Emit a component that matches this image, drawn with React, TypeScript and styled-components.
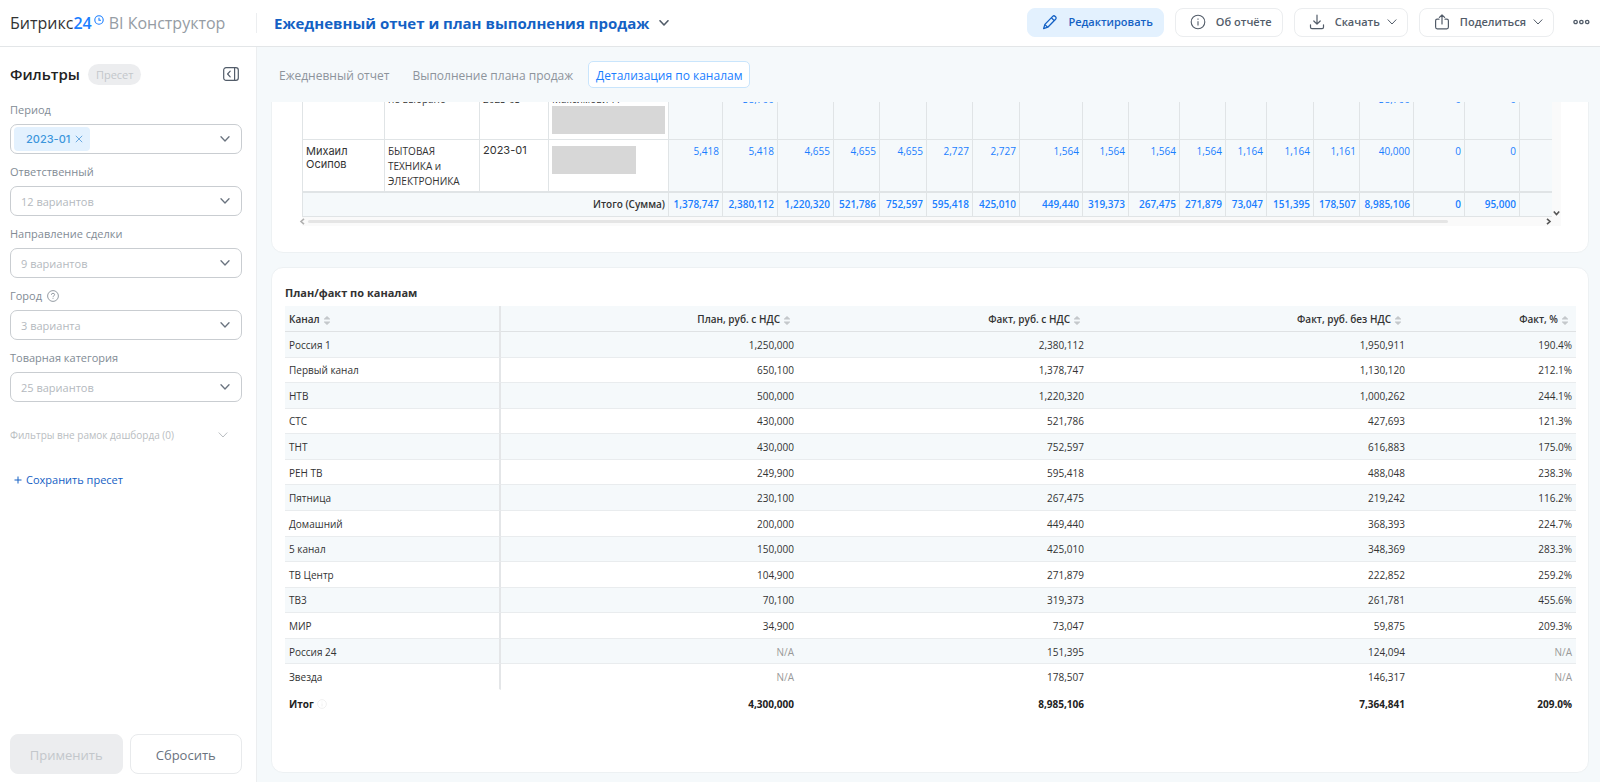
import React from "react";
import styled, { createGlobalStyle } from "styled-components";

const GlobalStyle = createGlobalStyle`
  *, *::before, *::after { box-sizing: border-box; }
  body { margin: 0; background: #f5f9fb; }
  body, button, select, table { font-family: "Open Sans", "Noto Sans", sans-serif; }
  button, select { margin: 0; padding: 0; border: 0; background: none; color: inherit; cursor: pointer; }
  svg { display: block; flex: none; }
`;

const Shell = styled.div`
  display: grid;
  grid-template-rows: 47px minmax(0, 1fr);
  grid-template-columns: 257px minmax(0, 1fr);
  height: 100vh;
  min-width: 1200px;
  color: #333;
`;

const Header = styled.header`
  grid-column: 1 / -1;
  display: flex;
  align-items: center;
  background: #fff;
  border-bottom: 1px solid #e3e6e8;
  padding-right: 10px;
`;

const Logo = styled.a`
  display: flex;
  align-items: center;
  width: 257px;
  height: 20px;
  padding-left: 10px;
  border-right: 1px solid #eceef0;
  font-size: 16px;
  line-height: 20px;
  color: #333;
  text-decoration: none;
  white-space: nowrap;
  b { font-weight: 500; }
  strong { font-weight: 600; color: #1a7eff; }
  svg { margin: 0 5px 6px 2px; }
  span { color: #959ca4; }
`;

const ReportTitle = styled.button`
  display: flex;
  align-items: center;
  gap: 10px;
  margin-left: 17px;
  font-size: 15px;
  line-height: 22px;
  font-weight: 700;
  color: #1461c4;
  white-space: nowrap;
`;

const Actions = styled.div`
  display: flex;
  align-items: center;
  gap: 11px;
  margin-left: auto;
`;

const ActionButton = styled.button<{ $primary?: boolean }>`
  display: flex;
  align-items: center;
  height: 29px;
  padding: 0 10px 0 14px;
  margin-bottom: 2px;
  border: 1px solid ${(p) => (p.$primary ? "#e3f1fe" : "#ebedef")};
  border-radius: 8px;
  background: ${(p) => (p.$primary ? "#e3f1fe" : "#fff")};
  color: ${(p) => (p.$primary ? "#1461c4" : "#525c69")};
  font-size: 11px;
  line-height: 16px;
  font-weight: 600;
  white-space: nowrap;
  span { margin: 0 7px 0 10px; }
  span:last-child { margin-right: 0; }
`;

const MoreButton = styled.button`
  padding: 7px 0 9px 8px;
`;

const Sidebar = styled.aside`
  display: flex;
  flex-direction: column;
  padding: 14px 14px 8px 10px;
  background: #fff;
  border-right: 1px solid #eceef0;
`;

const SidebarHead = styled.div`
  display: flex;
  align-items: center;
  gap: 8px;
  height: 26px;
  margin-bottom: 13px;
  padding-right: 3px;
  h2 { margin: 0; font-size: 15px; line-height: 22px; font-weight: 600; color: #222; }
  button { margin-left: auto; }
`;

const PresetPill = styled.span`
  height: 21px;
  padding: 0 8px;
  border-radius: 11px;
  background: #ecedef;
  color: #c3c7cb;
  font-size: 11px;
  line-height: 21px;
`;

const Field = styled.div`
  height: 62px;
`;

const FieldLabel = styled.label`
  display: flex;
  align-items: center;
  gap: 5px;
  height: 20px;
  margin-bottom: 4px;
  font-size: 11px;
  line-height: 20px;
  color: #828b95;
`;

const Box = styled.div`
  display: flex;
  align-items: center;
  height: 30px;
  padding: 0 11px 0 3px;
  border: 1px solid #c9cdd1;
  border-radius: 7px;
  background: #fff;
`;

const Select = styled.select`
  appearance: none;
  flex: 1;
  min-width: 0;
  height: 28px;
  padding-left: 7px;
  outline: none;
  font-size: 11px;
  color: #b4b9be;
`;

const Tag = styled.span`
  display: flex;
  align-items: center;
  gap: 5px;
  height: 24px;
  padding: 0 7px 0 12px;
  border-radius: 4px;
  background: #e3f1fe;
  color: #3b96dc;
  font-family: Inter, sans-serif;
  font-size: 11px;
  font-weight: 500;
`;

const OutOfScope = styled.button`
  display: flex;
  align-items: center;
  justify-content: space-between;
  height: 20px;
  margin-top: 15px;
  padding-right: 14px;
  font-size: 10px;
  color: #b9bdc1;
`;

const SavePreset = styled.button`
  display: flex;
  align-items: center;
  gap: 4px;
  height: 20px;
  margin: 25px 0 0 4px;
  font-size: 11px;
  line-height: 20px;
  font-weight: 500;
  color: #1461c4;
`;

const SidebarFoot = styled.div`
  display: grid;
  grid-template-columns: 1fr 1fr;
  gap: 7px;
  margin-top: auto;
`;

const FootButton = styled.button`
  height: 40px;
  padding-top: 2px;
  border: 1px solid #e8eaec;
  border-radius: 8px;
  font-size: 13px;
  color: #6a737f;
  &:disabled { background: #ecedef; border-color: #ecedef; color: #c3c7cb; }
`;

const Main = styled.main`
  display: flex;
  flex-direction: column;
  min-width: 0;
  min-height: 0;
  padding: 14px 11px 9px 14px;
`;

const Tabs = styled.nav`
  display: flex;
  align-items: center;
  flex: none;
  gap: 7px;
  height: 27px;
  margin-bottom: 14px;
`;

const Tab = styled.button<{ $active?: boolean }>`
  height: 27px;
  padding: 2px 7px 0;
  border: 1px solid ${(p) => (p.$active ? "#c9e5fc" : "transparent")};
  border-radius: 5px;
  background: ${(p) => (p.$active ? "#fff" : "transparent")};
  color: ${(p) => (p.$active ? "#1a7eff" : "#8d949c")};
  font-size: 12px;
  font-weight: ${(p) => (p.$active ? 500 : 400)};
  white-space: nowrap;
`;

/* The dashboard is scrolled to its end: the overflow leaves at the top edge. */
const Scroller = styled.div`
  display: flex;
  flex-direction: column;
  justify-content: flex-end;
  gap: 14px;
  flex: 1;
  min-height: 0;
  overflow: hidden;
`;

const Card = styled.section`
  flex: none;
  border: 1px solid #edf1f3;
  border-radius: 12px;
  background: #fff;
`;

const PivotCard = styled(Card)`
  padding: 14px 27px 26px 30px;
`;

const PlanCard = styled(Card)`
  height: 506px;
  padding: 13px 13px 0 13px;
  h3 { margin: 0 0 1px; font-size: 11px; line-height: 24px; font-weight: 700; color: #333; }
`;

const PivotFrame = styled.div`
  display: grid;
  grid-template-columns: minmax(0, 1fr) 9px;
  background: #fafafa;
`;

const Pivot = styled.table`
  width: 100%;
  table-layout: fixed;
  border-spacing: 0;
  font-size: 10px;
  line-height: 15px;
  td, th {
    padding: 4px 3px 0 3px;
    border-left: 1px solid #e0e4e6;
    border-bottom: 1px solid #e0e4e6;
    vertical-align: top;
    text-align: left;
    font-weight: 400;
    overflow: hidden;
    white-space: nowrap;
  }
  tbody th, tbody td { background: #fff; color: #333; }
  tbody td.num { background: #f5f9fb; color: #1a7eff; text-align: right; font-weight: 500; }
  tfoot td, tfoot th {
    height: 25px;
    padding-top: 0;
    border-top: 1px solid #e0e4e6;
    background: #f5f9fb;
    vertical-align: middle;
    text-align: right;
    font-weight: 600;
  }
  tfoot td { color: #1a7eff; }
`;

const PivotRow = styled.tr<{ $tight?: boolean }>`
  height: 52px;
  ${(p) => p.$tight && "td { padding-top: 5px; line-height: 13px; }"}
`;

const Sans = styled.span<{ $top?: number }>`
  display: block;
  padding-top: ${(p) => p.$top ?? 0}px;
  font-family: Inter, sans-serif;
  font-size: 11px;
  line-height: 13px;
`;

const Redacted = styled.div<{ $short?: boolean }>`
  width: ${(p) => (p.$short ? "84px" : "auto")};
  height: 28px;
  margin: ${(p) => (p.$short ? "2px 0 0" : "0 0 5px")};
  background: #d7d7d7;
`;

const VerticalBar = styled.div`
  display: flex;
  align-items: flex-end;
  justify-content: center;
`;

const HorizontalBar = styled.div`
  grid-column: 1 / -1;
  display: flex;
  align-items: center;
  justify-content: space-between;
  height: 9px;
  padding-right: 9px;
  margin-left: -3px;
`;

const Thumb = styled.div`
  width: 91%;
  height: 3px;
  margin: 0 auto 0 2px;
  border-radius: 2px;
  background: #e5e5e5;
`;

const Plan = styled.table`
  width: 100%;
  height: 410px;
  table-layout: fixed;
  border-spacing: 0;
  font-size: 10px;
  line-height: 15px;
  color: #333;
  th, td { padding: 2px 4px 0; text-align: right; font-weight: 400; white-space: nowrap; }
  th:first-child { text-align: left; }
  thead th { height: 26px; font-weight: 600; background: #f5f9fb; border-bottom: 1px solid #dfe2e4; }
  thead th:first-child, tbody th { border-right: 2px solid #e4e6e8; }
  tbody tr:nth-child(odd) { background: #f5f9fb; }
  tbody th, tbody td { font-weight: 500; border-bottom: 1px solid #e9ecee; }
  tbody tr:last-child > * { border-bottom-color: transparent; }
  tfoot td, tfoot th { height: 26px; font-weight: 700; color: #222; }
`;

const HeadCell = styled.span`
  display: inline-flex;
  align-items: center;
  gap: 4px;
  button { padding: 2px 4px 0 0; }
`;

const Missing = styled.span`
  font-weight: 400;
  color: #999;
`;

const FootLabel = styled.span`
  display: inline-flex;
  align-items: center;
  gap: 3px;
`;

const Chevron = ({ w = 10, color = "currentColor", thick = 1.3 }: { w?: number; color?: string; thick?: number }) => (
  <svg width={w} height={w * 0.6} viewBox="0 0 10 6" fill="none" stroke={color} strokeWidth={thick} strokeLinecap="round" strokeLinejoin="round">
    <path d="M1 .8 5 5 9 .8" />
  </svg>
);

const ClockIcon = () => (
  <svg width="10" height="10" viewBox="0 0 10 10" fill="none" stroke="#1a7eff" strokeWidth="1.1">
    <circle cx="5" cy="5" r="4.2" />
    <path d="M5 2.8V5.2H7" />
  </svg>
);

const PencilIcon = () => (
  <svg width="16" height="16" viewBox="0 0 16 16" fill="none" stroke="currentColor" strokeWidth="1.3" strokeLinejoin="round">
    <path d="M1.6 14.6 2.9 10.4 10.7 2.4Q11.9 1.2 13.2 2.4L13.6 2.8Q14.8 4 13.6 5.3L5.8 13.2Z" />
    <path d="M9.4 3.8 12.2 6.6M2.9 10.6 5.6 13.2" />
  </svg>
);

const InfoIcon = () => (
  <svg width="16" height="16" viewBox="0 0 16 16" fill="none" stroke="currentColor" strokeWidth="1.1">
    <circle cx="8" cy="8" r="6.8" />
    <path d="M8 7.2V11.4M8 4.4V5.8" />
  </svg>
);

const DownloadIcon = () => (
  <svg width="16" height="16" viewBox="0 0 16 16" fill="none" stroke="currentColor" strokeWidth="1.2" strokeLinecap="round" strokeLinejoin="round">
    <path d="M8 1.2V10M4.8 7 8 10.2 11.2 7M1.5 10.8V13.2Q1.5 14.6 2.9 14.6H13.1Q14.5 14.6 14.5 13.2V10.8" />
  </svg>
);

const ShareIcon = () => (
  <svg width="16" height="16" viewBox="0 0 16 16" fill="none" stroke="currentColor" strokeWidth="1.2" strokeLinecap="round" strokeLinejoin="round">
    <path d="M8 10V1M5.4 3.4 8 .8 10.6 3.4M5 5.2H3.2Q1.6 5.2 1.6 6.8V13Q1.6 14.8 3.2 14.8H12.8Q14.4 14.8 14.4 13V6.8Q14.4 5.2 12.8 5.2H11" />
  </svg>
);

const DotsIcon = () => (
  <svg width="17" height="6" viewBox="0 0 17 6" fill="none" stroke="#525c69" strokeWidth="1.3">
    <circle cx="2.6" cy="3" r="1.7" />
    <circle cx="8.4" cy="3" r="1.7" />
    <circle cx="14.2" cy="3" r="1.7" />
  </svg>
);

const CollapseIcon = () => (
  <svg width="16" height="14" viewBox="0 0 16 14" fill="none" stroke="#525c69" strokeWidth="1.2" strokeLinecap="round" strokeLinejoin="round">
    <rect x=".7" y=".7" width="14.6" height="12.6" rx="2.4" />
    <path d="M11.6 1V13M7.2 4.2 4.6 7 7.2 9.8" />
  </svg>
);

const HelpIcon = () => (
  <svg width="12" height="12" viewBox="0 0 12 12" fill="none" stroke="#959ca4">
    <circle cx="6" cy="6" r="5.4" />
    <path d="M4.4 4.8Q4.4 3.3 6 3.3T7.6 4.7Q7.6 5.5 6.6 6Q6 6.3 6 7M6 7.8V8.8" />
  </svg>
);

const CrossIcon = () => (
  <svg width="8" height="8" viewBox="0 0 8 8" stroke="#6aa9e0">
    <path d="M.8.8 7.2 7.2M7.2.8.8 7.2" />
  </svg>
);

const SortIcon = () => (
  <svg width="6" height="9" viewBox="0 0 6 9" fill="#c4c8cb">
    <path d="M3 0 6 2.8V3.6H0V2.8ZM3 9 0 6.2V5.4H6V6.2Z" />
  </svg>
);

const ArrowTip = ({ d, color }: { d: string; color: string }) => (
  <svg width="7" height="7" viewBox="0 0 7 7" fill="none" stroke={color} strokeWidth="1.6">
    <path d={d} />
  </svg>
);

const filters = [
  { id: "owner", label: "Ответственный", hint: "12 вариантов" },
  { id: "pipeline", label: "Направление сделки", hint: "9 вариантов" },
  { id: "city", label: "Город", hint: "3 варианта", help: true },
  { id: "category", label: "Товарная категория", hint: "25 вариантов" },
];

const pivotWidths = [82, 95, 69, 120, 54, 55, 56, 46, 47, 46, 47, 63, 46, 51, 46, 41, 47, 46, 54, 51, 55];
const pivotCut = ["", "38,700", "", "", "", "", "", "", "", "", "", "", "", "", "38,700", "0", "0", ""];
const pivotRow = ["5,418", "5,418", "4,655", "4,655", "4,655", "2,727", "2,727", "1,564", "1,564", "1,564", "1,564", "1,164", "1,164", "1,161", "40,000", "0", "0", ""];
const pivotSum = ["1,378,747", "2,380,112", "1,220,320", "521,786", "752,597", "595,418", "425,010", "449,440", "319,373", "267,475", "271,879", "73,047", "151,395", "178,507", "8,985,106", "0", "95,000", ""];

const planWidths = [216, 297, 290, 321, 167];
const planHeads = ["План, руб. с НДС", "Факт, руб. с НДС", "Факт, руб. без НДС", "Факт, %"];
const planRows = [
  ["Россия 1", "1,250,000", "2,380,112", "1,950,911", "190.4%"],
  ["Первый канал", "650,100", "1,378,747", "1,130,120", "212.1%"],
  ["НТВ", "500,000", "1,220,320", "1,000,262", "244.1%"],
  ["СТС", "430,000", "521,786", "427,693", "121.3%"],
  ["ТНТ", "430,000", "752,597", "616,883", "175.0%"],
  ["РЕН ТВ", "249,900", "595,418", "488,048", "238.3%"],
  ["Пятница", "230,100", "267,475", "219,242", "116.2%"],
  ["Домашний", "200,000", "449,440", "368,393", "224.7%"],
  ["5 канал", "150,000", "425,010", "348,369", "283.3%"],
  ["ТВ Центр", "104,900", "271,879", "222,852", "259.2%"],
  ["ТВ3", "70,100", "319,373", "261,781", "455.6%"],
  ["МИР", "34,900", "73,047", "59,875", "209.3%"],
  ["Россия 24", "N/A", "151,395", "124,094", "N/A"],
  ["Звезда", "N/A", "178,507", "146,317", "N/A"],
];

const SortHead = ({ text }: { text: string }) => (
  <HeadCell>
    {text}
    <button aria-label={`Сортировать: ${text}`}>
      <SortIcon />
    </button>
  </HeadCell>
);

export default function App() {
  return (
    <Shell>
      <GlobalStyle />
      <Header>
        <Logo href="#">
          <b>Битрикс</b>
          <strong>24</strong>
          <ClockIcon />
          <span>BI Конструктор</span>
        </Logo>
        <ReportTitle>
          Ежедневный отчет и план выполнения продаж
          <Chevron color="#525c69" thick={1.6} />
        </ReportTitle>
        <Actions>
          <ActionButton $primary>
            <PencilIcon />
            <span>Редактировать</span>
          </ActionButton>
          <ActionButton>
            <InfoIcon />
            <span>Об отчёте</span>
          </ActionButton>
          <ActionButton>
            <DownloadIcon />
            <span>Скачать</span>
            <Chevron thick={1} />
          </ActionButton>
          <ActionButton>
            <ShareIcon />
            <span>Поделиться</span>
            <Chevron thick={1} />
          </ActionButton>
          <MoreButton aria-label="Ещё">
            <DotsIcon />
          </MoreButton>
        </Actions>
      </Header>

      <Sidebar>
        <SidebarHead>
          <h2>Фильтры</h2>
          <PresetPill>Пресет</PresetPill>
          <button aria-label="Свернуть панель">
            <CollapseIcon />
          </button>
        </SidebarHead>
        <Field>
          <FieldLabel htmlFor="period">Период</FieldLabel>
          <Box>
            <Tag>
              2023-01
              <button aria-label="Удалить 2023-01">
                <CrossIcon />
              </button>
            </Tag>
            <Select id="period" />
            <Chevron color="#6a737f" />
          </Box>
        </Field>
        {filters.map((f) => (
          <Field key={f.id}>
            <FieldLabel htmlFor={f.id}>
              {f.label}
              {f.help && <HelpIcon />}
            </FieldLabel>
            <Box>
              <Select id={f.id}>
                <option>{f.hint}</option>
              </Select>
              <Chevron color="#6a737f" />
            </Box>
          </Field>
        ))}
        <OutOfScope>
          Фильтры вне рамок дашборда (0)
          <Chevron thick={1} />
        </OutOfScope>
        <SavePreset>
          <svg width="8" height="8" viewBox="0 0 8 8" stroke="currentColor">
            <path d="M4 .5V7.5M.5 4H7.5" />
          </svg>
          Сохранить пресет
        </SavePreset>
        <SidebarFoot>
          <FootButton disabled>Применить</FootButton>
          <FootButton>Сбросить</FootButton>
        </SidebarFoot>
      </Sidebar>

      <Main>
        <Tabs>
          <Tab>Ежедневный отчет</Tab>
          <Tab>Выполнение плана продаж</Tab>
          <Tab $active>Детализация по каналам</Tab>
        </Tabs>
        <Scroller>
          <PivotCard>
            <PivotFrame>
              <Pivot>
                <colgroup>
                  {pivotWidths.map((w, i) => (
                    <col key={i} width={w} />
                  ))}
                  <col />
                </colgroup>
                <tbody>
                  <PivotRow $tight>
                    <th scope="row" />
                    <td>не выбрано</td>
                    <td>2023-03</td>
                    <td>
                      Максимович Г
                      <Redacted />
                    </td>
                    {pivotCut.map((v, i) => (
                      <td className="num" key={i}>{v}</td>
                    ))}
                  </PivotRow>
                  <PivotRow>
                    <th scope="row">
                      <Sans $top={1}>
                        Михаил
                        <br />
                        Осипов
                      </Sans>
                    </th>
                    <td>
                      БЫТОВАЯ
                      <br />
                      ТЕХНИКА и<br />
                      ЭЛЕКТРОНИКА
                    </td>
                    <td>
                      <Sans>2023-01</Sans>
                    </td>
                    <td>
                      <Redacted $short />
                    </td>
                    {pivotRow.map((v, i) => (
                      <td className="num" key={i}>{v}</td>
                    ))}
                  </PivotRow>
                </tbody>
                <tfoot>
                  <tr>
                    <th scope="row" colSpan={4}>Итого (Сумма)</th>
                    {pivotSum.map((v, i) => (
                      <td key={i}>{v}</td>
                    ))}
                  </tr>
                </tfoot>
              </Pivot>
              <VerticalBar>
                <ArrowTip d="M.8 1.5 3.5 4.5 6.2 1.5" color="#555" />
              </VerticalBar>
              <HorizontalBar>
                <ArrowTip d="M5 .8 2 3.5 5 6.2" color="#b0b0b0" />
                <Thumb />
                <ArrowTip d="M2 .8 5 3.5 2 6.2" color="#555" />
              </HorizontalBar>
            </PivotFrame>
          </PivotCard>

          <PlanCard>
            <h3>План/факт по каналам</h3>
            <Plan>
              <colgroup>
                {planWidths.map((w, i) => (
                  <col key={i} width={w} />
                ))}
              </colgroup>
              <thead>
                <tr>
                  <th scope="col">
                    <SortHead text="Канал" />
                  </th>
                  {planHeads.map((h) => (
                    <th scope="col" key={h}>
                      <SortHead text={h} />
                    </th>
                  ))}
                </tr>
              </thead>
              <tbody>
                {planRows.map(([name, ...cells]) => (
                  <tr key={name}>
                    <th scope="row">{name}</th>
                    {cells.map((c, i) => (
                      <td key={i}>{c === "N/A" ? <Missing>N/A</Missing> : c}</td>
                    ))}
                  </tr>
                ))}
              </tbody>
              <tfoot>
                <tr>
                  <th scope="row">
                    <FootLabel>
                      Итог
                      <svg width="10" height="10" viewBox="0 0 10 10" fill="none" stroke="#f0f0f0">
                        <circle cx="5" cy="5" r="4.4" />
                        <path d="M5 4.4V7.4M5 2.6V3.4" />
                      </svg>
                    </FootLabel>
                  </th>
                  <td>4,300,000</td>
                  <td>8,985,106</td>
                  <td>7,364,841</td>
                  <td>209.0%</td>
                </tr>
              </tfoot>
            </Plan>
          </PlanCard>
        </Scroller>
      </Main>
    </Shell>
  );
}
